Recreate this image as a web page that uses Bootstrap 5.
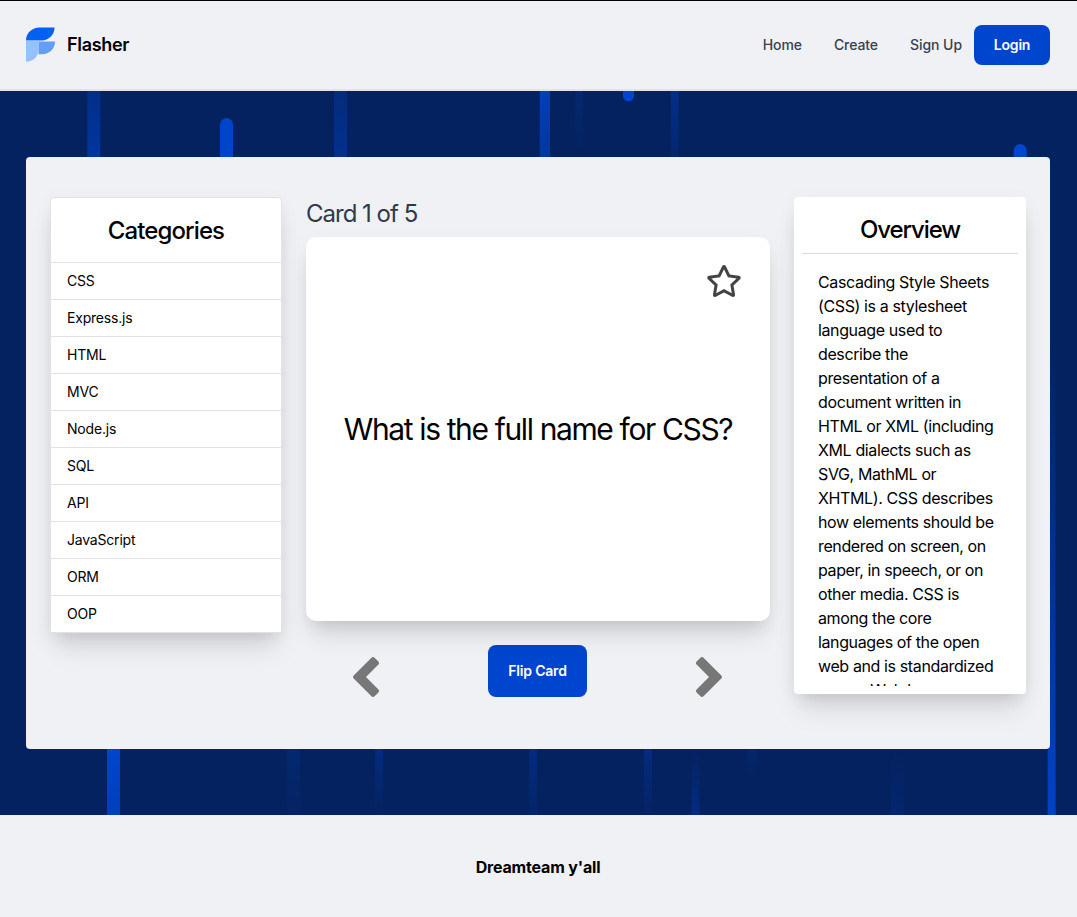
<!DOCTYPE html>
<html lang="en">
<head>
<meta charset="utf-8">
<meta name="viewport" content="width=device-width, initial-scale=1">
<title>Flasher</title>
<link href="https://cdn.jsdelivr.net/npm/bootstrap@5.3.0/dist/css/bootstrap.min.css" rel="stylesheet">
<style>
  body { font-family: Inter, "Liberation Sans", sans-serif; background: #f0f1f5; color: #000; overflow: hidden; }
  .site-header { height: 91px; border-top: 1px solid #000; border-bottom: 2px solid #dfe4ea; padding: 0 27px 0 26px; }
  .brand-link { margin-bottom: 2px; }
  .brand-name { font-size: 18px; font-weight: 600; letter-spacing: -.32px; margin-left: 12px; color: #000; }
  .site-header .nav-link { font-size: 14px; font-weight: 500; color: #374151; padding: 0; letter-spacing: -.1px; line-height: 20px; margin-right: 32px; }
  .site-header .nav-link.nav-last { margin-right: 12px; letter-spacing: -.05px; }
  .btn-main, .btn-main:hover { background: #0045ce; color: #fff; border: 0; border-radius: 8px; font-size: 14px; font-weight: 600; letter-spacing: -.2px; padding: 0 0 2px; }
  .btn-login { width: 76px; height: 40px; }
  .btn-flip { width: 99px; height: 52px; }
  .stage { height: 724px; background: #04225f; padding: 66px 27px 0 26px; }
  .streaks { position: absolute; inset: 0; }
  .panel { height: 592px; background: #f0f1f5; border-radius: 4px; padding: 40px 24px 0; }
  .panel-grid { grid-template-columns: 1fr 2fr 1fr; column-gap: 24px; align-items: start; }
  .lift { box-shadow: 0 20px 25px -5px rgba(0,0,0,.1), 0 8px 16px -6px rgba(0,0,0,.1), 0 4px 24px rgba(0,0,0,.03); }
  .cat-list { border-radius: 4px 4px 2px 2px; --bs-list-group-border-color: #e1e2e8; --bs-list-group-color: #000; }
  .cat-list .list-group-item { height: 37px; padding: 8px 16px; font-size: 14px; line-height: 20px; letter-spacing: -.2px; }
  .cat-list .cat-head { height: 66px; padding: 15px 0 0; font-size: 24px; line-height: 36px; font-weight: 500; letter-spacing: -.9px; }
  .counter { font-size: 24px; line-height: 32px; letter-spacing: -1px; color: #2f3a4a; padding-top: 1px; margin-bottom: 7px; }
  .flash { height: 384px; border-radius: 10px; background: #fff; }
  .flash .star { position: absolute; right: 28.500px; top: 28px; }
  .question { font-size: 30px; letter-spacing: -1.370px; line-height: 36px; }
  .controls { margin-top: 24px; padding: 0 48px 0 47px; height: 52px; }
  .overview { height: 497px; background: #fff; border-radius: 4px; padding: 8px; }
  .overview h2 { font-size: 24px; font-weight: 500; line-height: 32px; letter-spacing: -1.100px; padding: 9px 0 7px; margin: 0; border-bottom: 1px solid #dcdde0; }
  .overview-text { height: 432px; overflow: hidden; padding: 16px 16px 0; font-size: 16px; line-height: 24px; letter-spacing: -.380px; }
  .site-footer { height: 102px; font-size: 16px; font-weight: 700; letter-spacing: -.180px; padding-top: 1px; padding-right: 1px; }
</style>
</head>
<body>
<header class="site-header d-flex align-items-center justify-content-between">
  <a class="brand-link d-flex align-items-center text-decoration-none" href="#">
    <svg width="29" height="35" viewBox="0 0 29 35" aria-hidden="true">
      <path fill="#0061f2" d="M0 13.4C0 6 6 .5 13.500 .5H28.500C28.500 8 22.500 13.400 15.500 13.400Z"/>
      <path fill="#629df6" d="M12.500 14.500H29C29 21.500 23.500 27.300 16 27.300H12.500Z"/>
      <path fill="#94c2fd" d="M0 13.800H12.800V21.500C12.800 29.500 7 34.800 0 34.800Z"/>
    </svg>
    <span class="brand-name">Flasher</span>
  </a>
  <nav class="nav align-items-center">
    <a class="nav-link" href="#">Home</a>
    <a class="nav-link" href="#">Create</a>
    <a class="nav-link nav-last" href="#">Sign Up</a>
    <button class="btn btn-main btn-login" type="button">Login</button>
  </nav>
</header>

<main class="stage position-relative">
  <svg class="streaks" width="1077" height="724" viewBox="0 91 1077 724" aria-hidden="true">
    <defs>
      <linearGradient id="a1" x2="0" y2="1"><stop stop-color="#022e88"/><stop offset="1" stop-color="#01369f"/></linearGradient>
      <linearGradient id="a2" x2="0" y2="1"><stop stop-color="#042c7c"/><stop offset="1" stop-color="#03308e"/></linearGradient>
      <linearGradient id="a3" x2="0" y2="1"><stop stop-color="#003fbb"/><stop offset="1" stop-color="#01379f"/></linearGradient>
      <linearGradient id="a4" x2="0" y2="1"><stop stop-color="#042970"/><stop offset="1" stop-color="#04225f"/></linearGradient>
      <linearGradient id="a5" x2="0" y2="1"><stop stop-color="#022f8a"/><stop offset="1" stop-color="#04276c"/></linearGradient>
      <linearGradient id="b1" x2="0" y2="1"><stop stop-color="#0045cf"/><stop offset="1" stop-color="#003fba"/></linearGradient>
      <linearGradient id="b2" x2="0" y2="1"><stop stop-color="#032b80"/><stop offset="1" stop-color="#04225f"/></linearGradient>
      <linearGradient id="b3" x2="0" y2="1"><stop stop-color="#04225f"/><stop offset="1" stop-color="#032b80"/></linearGradient>
      <linearGradient id="b4" x2="0" y2="1"><stop stop-color="#04225f"/><stop offset="1" stop-color="#0042c6"/></linearGradient>
      <linearGradient id="b5" x2="0" y2="1"><stop stop-color="#04225f"/><stop offset="1" stop-color="#03266e"/></linearGradient>
    </defs>
    <rect x="87.300" y="91" width="13" height="66" fill="url(#a1)"/>
    <rect x="220" y="118" width="13" height="60" rx="6.500" fill="#0044ca"/>
    <rect x="334" y="91" width="13" height="66" fill="url(#a2)"/>
    <rect x="539.700" y="91" width="10.300" height="66" fill="url(#a3)"/>
    <rect x="575.500" y="91" width="7.500" height="62" fill="url(#a4)"/>
    <rect x="623" y="80" width="11" height="21.300" rx="5.500" fill="#0045cf"/>
    <rect x="670.800" y="91" width="7.800" height="66" fill="url(#a5)"/>
    <rect x="1013.700" y="144" width="13" height="40" rx="6.500" fill="#0045cf"/>
    <rect x="1047.600" y="340" width="8" height="475" fill="url(#b4)"/>
    <rect x="107" y="749" width="13" height="66" fill="url(#b1)"/>
    <rect x="287" y="749" width="13" height="80" fill="url(#a4)"/>
    <rect x="375" y="749" width="8" height="66" fill="url(#b2)"/>
    <rect x="529" y="749" width="8" height="90" fill="url(#b2)"/>
    <rect x="644" y="749" width="8" height="76" fill="url(#b2)"/>
    <rect x="691.500" y="749" width="8" height="66" fill="url(#b3)"/>
    <rect x="747" y="749" width="10" height="30" fill="url(#a4)" opacity=".6"/>
    <rect x="890.800" y="749" width="13" height="66" fill="url(#b5)"/>
  </svg>

  <div class="panel position-relative">
    <div class="panel-grid d-grid">
      <div class="list-group cat-list lift">
        <h2 class="list-group-item cat-head text-center m-0">Categories</h2>
        <a class="list-group-item">CSS</a>
        <a class="list-group-item">Express.js</a>
        <a class="list-group-item">HTML</a>
        <a class="list-group-item">MVC</a>
        <a class="list-group-item">Node.js</a>
        <a class="list-group-item">SQL</a>
        <a class="list-group-item">API</a>
        <a class="list-group-item">JavaScript</a>
        <a class="list-group-item">ORM</a>
        <a class="list-group-item">OOP</a>
      </div>

      <div>
        <div class="counter">Card 1 of 5</div>
        <div class="flash lift position-relative d-flex align-items-center justify-content-center">
          <svg class="star" width="36" height="32" viewBox="0 0 576 512" fill="#444" aria-hidden="true"><path d="M528.1 171.5L382 150.2 316.7 17.800c-11.700-23.600-45.600-23.900-57.400 0L194 150.200 47.900 171.500c-26.200 3.800-36.700 36.100-17.700 54.600l105.700 103-25 145.500c-4.500 26.300 23.200 46 46.400 33.700L288 439.600l130.700 68.700c23.200 12.200 50.900-7.400 46.400-33.700l-25-145.500 105.700-103c19-18.500 8.500-50.800-17.700-54.600zM388.600 312.300l23.700 138.400L288 385.400l-124.300 65.300 23.700-138.400-100.600-98 139-20.200 62.200-126 62.200 126 139 20.200-100.600 98z"/></svg>
          <div class="question">What is the full name for CSS?</div>
        </div>
        <div class="controls d-flex justify-content-between">
          <svg class="mt-auto" width="26" height="40" viewBox="0 0 26 40" aria-hidden="true"><path d="M2.700 20 20 2.700 23.400 6.100 9.500 20 23.400 33.900 20 37.300Z" fill="#777" stroke="#777" stroke-width="5" stroke-linejoin="round"/></svg>
          <button class="btn btn-main btn-flip" type="button">Flip Card</button>
          <svg class="mt-auto" width="26" height="40" viewBox="0 0 26 40" aria-hidden="true"><path d="M23.300 20 6 2.700 2.600 6.100 16.500 20 2.600 33.900 6 37.300Z" fill="#777" stroke="#777" stroke-width="5" stroke-linejoin="round"/></svg>
        </div>
      </div>

      <div class="overview lift">
        <h2 class="text-center">Overview</h2>
        <div class="overview-text">Cascading Style Sheets<br>(CSS) is a stylesheet<br>language used to<br>describe the<br>presentation of a<br>document written in<br>HTML or XML (including<br>XML dialects such as<br>SVG, MathML or<br>XHTML). CSS describes<br>how elements should be<br>rendered on screen, on<br>paper, in speech, or on<br>other media. CSS is<br>among the core<br>languages of the open<br>web and is standardized<br>across Web browsers</div>
      </div>
    </div>
  </div>
</main>

<footer class="site-footer d-flex align-items-center justify-content-center">Dreamteam y'all</footer>
<script src="https://cdn.jsdelivr.net/npm/bootstrap@5.3.0/dist/js/bootstrap.bundle.min.js"></script>
</body>
</html>
